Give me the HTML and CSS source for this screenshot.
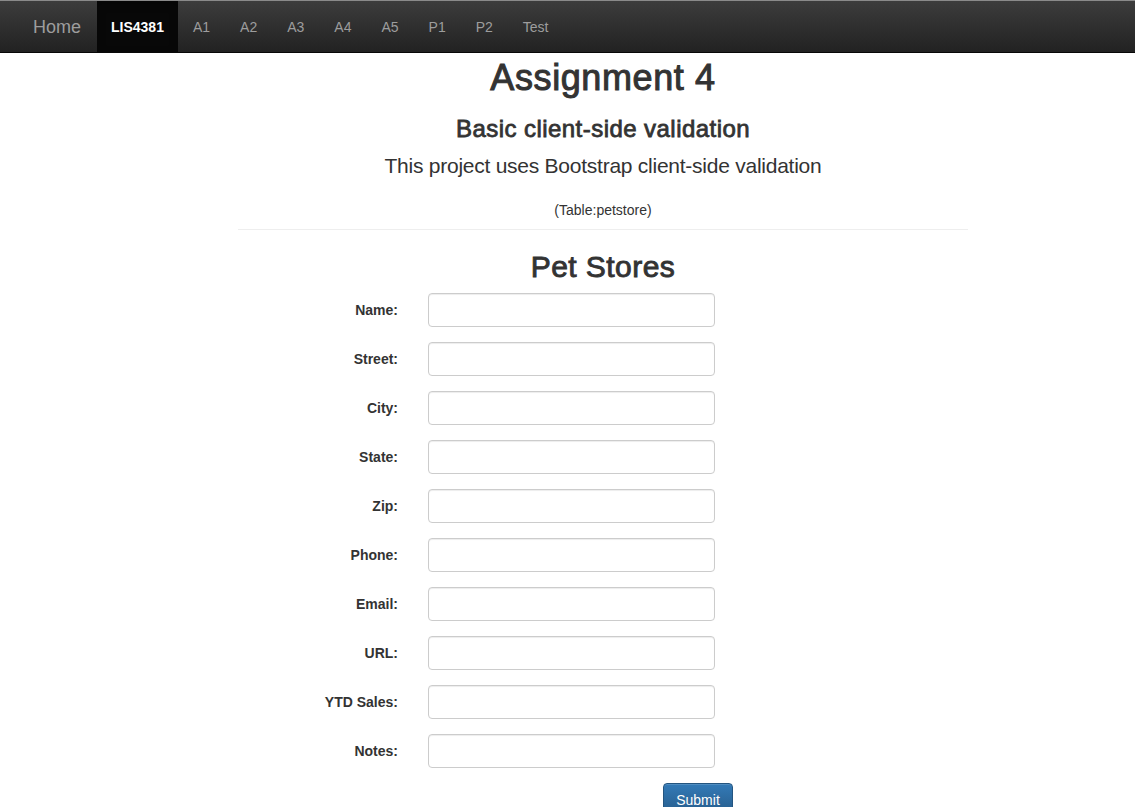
FILE: index.html
```html
<!DOCTYPE html>
<html>
<head>
<meta charset="utf-8">
<title>Assignment 4</title>
<link rel="stylesheet" href="styles.css">
</head>
<body>
<nav class="navbar">
  <a class="brand" href="#">Home</a>
  <ul class="nav">
    <li class="active"><a href="#">LIS4381</a></li>
    <li><a href="#">A1</a></li>
    <li><a href="#">A2</a></li>
    <li><a href="#">A3</a></li>
    <li><a href="#">A4</a></li>
    <li><a href="#">A5</a></li>
    <li><a href="#">P1</a></li>
    <li><a href="#">P2</a></li>
    <li><a href="#">Test</a></li>
  </ul>
</nav>
<main class="page">
  <h1 class="title">Assignment 4</h1>
  <h3 class="subtitle">Basic client-side validation</h3>
  <p class="lead">This project uses Bootstrap client-side validation</p>
  <p class="table-name">(Table:petstore)</p>
  <hr class="divider">
  <h2 class="form-title">Pet Stores</h2>
  <form class="store-form">
    <label class="form-label" for="f1">Name:</label><input class="form-input" id="f1" type="text">
    <label class="form-label" for="f2">Street:</label><input class="form-input" id="f2" type="text">
    <label class="form-label" for="f3">City:</label><input class="form-input" id="f3" type="text">
    <label class="form-label" for="f4">State:</label><input class="form-input" id="f4" type="text">
    <label class="form-label" for="f5">Zip:</label><input class="form-input" id="f5" type="text">
    <label class="form-label" for="f6">Phone:</label><input class="form-input" id="f6" type="text">
    <label class="form-label" for="f7">Email:</label><input class="form-input" id="f7" type="text">
    <label class="form-label" for="f8">URL:</label><input class="form-input" id="f8" type="text">
    <label class="form-label" for="f9">YTD Sales:</label><input class="form-input" id="f9" type="text">
    <label class="form-label" for="f10">Notes:</label><input class="form-input" id="f10" type="text">
    <div class="actions"><button class="btn-submit" type="button">Submit</button></div>
  </form>
</main>
</body>
</html>
```
FILE: styles.css
```css
html, body {
  margin: 0;
  padding: 0;
  background: #fff;
  font-family: "Liberation Sans", Arial, sans-serif;
  color: #333;
  font-size: 14px;
  line-height: 20px;
}
.navbar {
  display: flex;
  align-items: stretch;
  height: 51px;
  padding-left: 18px;
  background: linear-gradient(to bottom, #3c3c3c 0%, #222 100%);
  border-top: 1px solid #8a8a8a;
  border-bottom: 1px solid #080808;
}
.brand {
  display: flex;
  align-items: center;
  padding: 1px 16px 0 15px;
  font-size: 18px;
  color: #9d9d9d;
  text-decoration: none;
}
.nav {
  display: flex;
  list-style: none;
  margin: 0;
  padding: 0;
}
.nav li a {
  display: flex;
  align-items: center;
  box-sizing: border-box;
  height: 100%;
  padding: 1px 15px 0;
  color: #9d9d9d;
  text-decoration: none;
  font-size: 14px;
}
.nav li.active a {
  padding: 1px 14px 0;
  background: #080808;
  color: #fff;
  font-weight: bold;
  box-shadow: inset 0 3px 9px rgba(0,0,0,.25);
}
.page {
  width: 730px;
  margin-left: 238px;
  text-align: center;
}
.title {
  margin: 5px 0 0;
  font-size: 36px;
  line-height: 40px;
  font-weight: 500;
  letter-spacing: 0.6px;
  -webkit-text-stroke: 1px #333;
}
.subtitle {
  margin: 18px 0 0;
  font-size: 24px;
  line-height: 26px;
  font-weight: 500;
  letter-spacing: 0.45px;
  -webkit-text-stroke: 0.8px #333;
}
.lead {
  margin: 9px 0 0;
  font-size: 21px;
  line-height: 29px;
  font-weight: 300;
  letter-spacing: -0.25px;
  color: #333;
}
.table-name {
  margin: 20px 0 0;
  font-size: 14px;
  line-height: 20px;
}
.divider {
  margin: 9px 0 0;
  border: 0;
  border-top: 1px solid #eee;
}
.form-title {
  margin: 20px 0 0;
  font-size: 30px;
  line-height: 33px;
  font-weight: 500;
  letter-spacing: 0.45px;
  -webkit-text-stroke: 0.9px #333;
}
.store-form {
  display: grid;
  grid-template-columns: 160px 287px;
  column-gap: 30px;
  row-gap: 15px;
  margin-top: 10px;
  text-align: left;
}
.form-label {
  justify-self: end;
  align-self: center;
  font-weight: bold;
  font-size: 14px;
}
.form-input {
  box-sizing: border-box;
  width: 287px;
  height: 34px;
  border: 1px solid #ccc;
  border-radius: 4px;
  box-shadow: inset 0 1px 1px rgba(0,0,0,.075);
  font-family: inherit;
  font-size: 14px;
  padding: 6px 12px;
  margin: 0;
}
.actions {
  grid-column: 1 / 3;
  padding-left: 425px;
}
.btn-submit {
  width: 70px;
  height: 34px;
  padding: 6px 12px;
  border: 1px solid #245580;
  border-radius: 4px;
  background: linear-gradient(to bottom, #337ab7 0%, #265a88 100%);
  color: #fff;
  font-family: inherit;
  font-size: 14px;
  line-height: 20px;
  box-shadow: inset 0 1px 0 rgba(255,255,255,.15);
}
```
